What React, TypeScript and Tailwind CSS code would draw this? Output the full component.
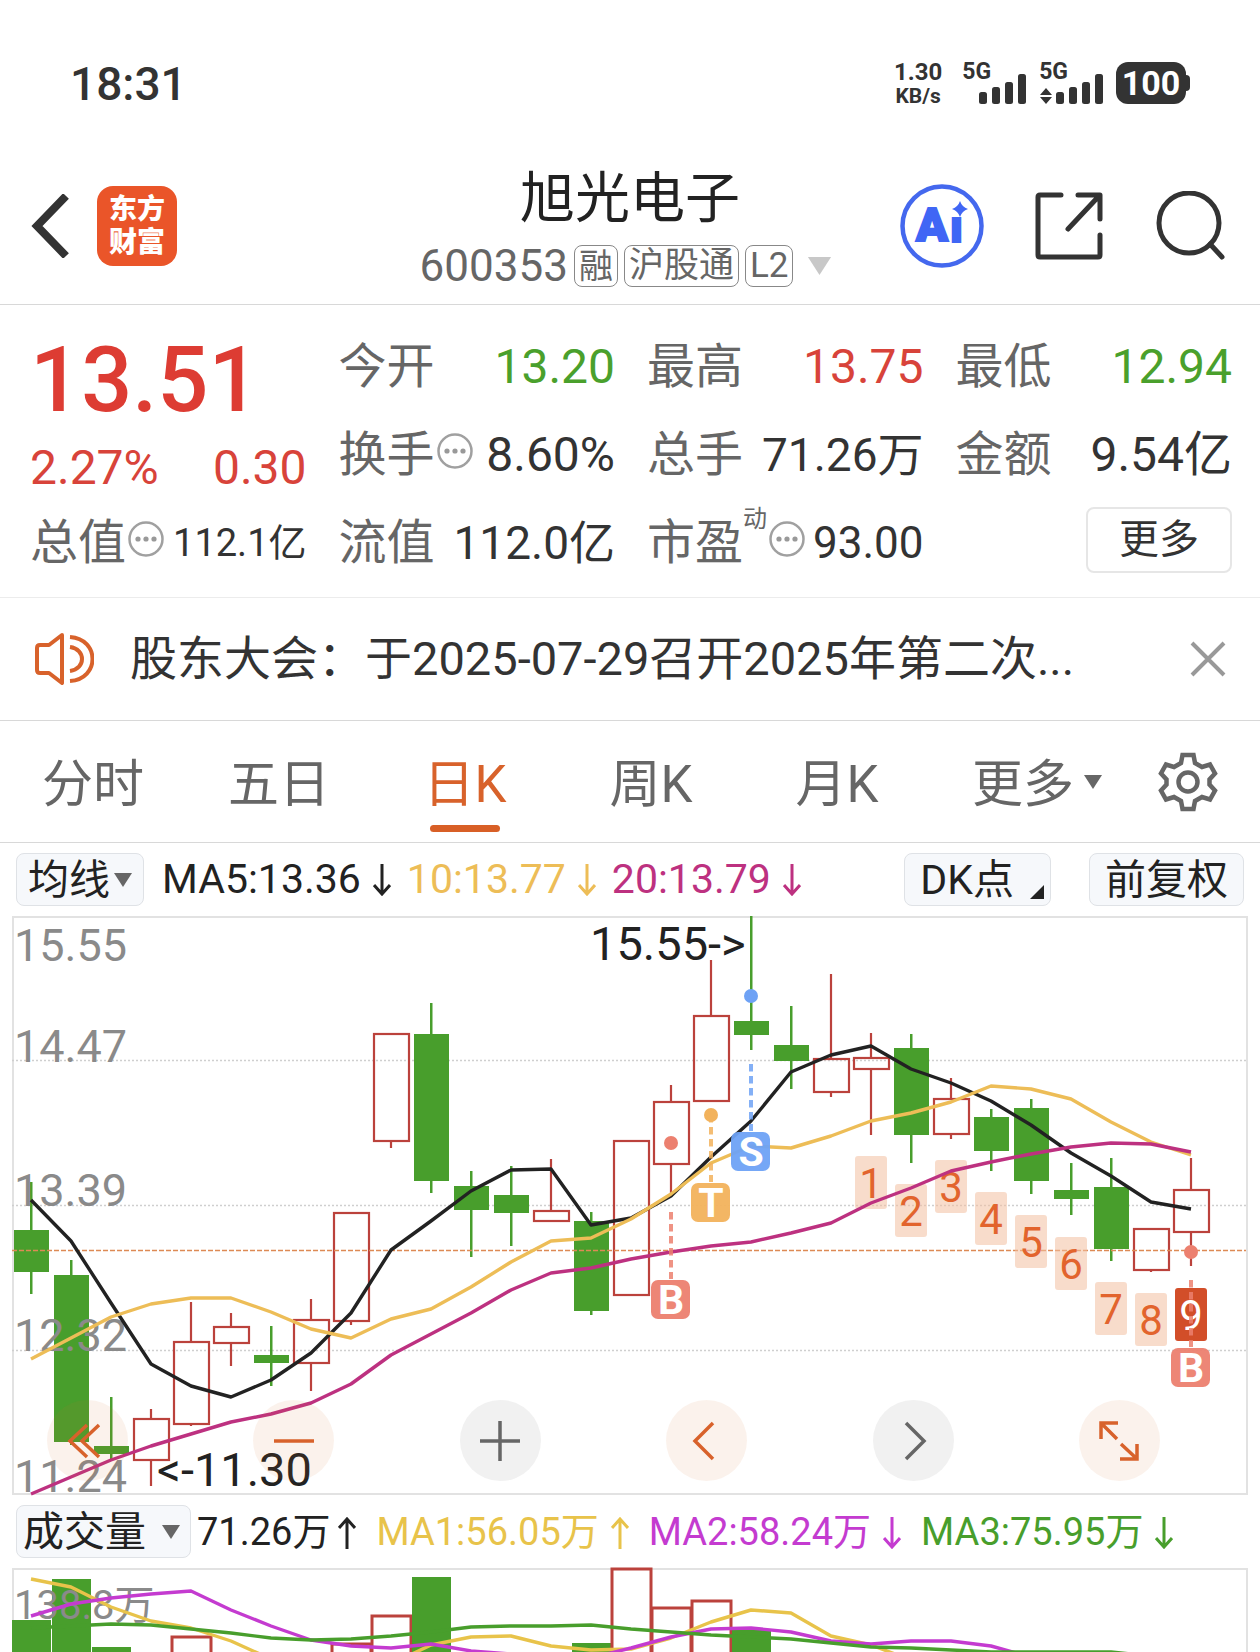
import React, { useState } from 'react';

type Candle = { up: boolean; high: number; top: number; bottom: number; low: number };

const STEP = 40;
const cx = (i: number) => 19 + i * STEP;

const u = (high: number, top: number, bottom: number, low: number): Candle => ({ up: true, high, top, bottom, low });
const d = (high: number, top: number, bottom: number, low: number): Candle => ({ up: false, high, top, bottom, low });

const candles: Candle[] = [
  d(266, 314, 356, 378), d(344, 359, 526, 529), d(481, 530, 538, 543), u(493, 503, 544, 570), u(386, 426, 508, 510),
  u(397, 411, 427, 450), d(410, 439, 447, 470), u(383, 404, 447, 475), u(297, 297, 405, 409), u(118, 118, 225, 232),
  d(87, 118, 265, 277), d(255, 270, 294, 341), d(250, 279, 297, 330), u(243, 295, 305, 305), d(296, 305, 395, 399),
  u(225, 225, 379, 379), u(169, 186, 248, 281), u(44, 100, 185, 185), d(0, 105, 119, 134), d(90, 129, 145, 173),
  u(58, 143, 176, 181), u(117, 142, 153, 219), d(118, 132, 219, 247), u(162, 183, 218, 223), d(193, 201, 235, 255),
  d(183, 192, 265, 278), d(247, 274, 283, 299), d(242, 271, 333, 345), u(312, 313, 354, 356), u(242, 274, 316, 350),
];

const ma5 = [284, 325, 387, 448, 470, 481, 464, 437, 397, 334, 305, 275, 254, 253, 309, 302, 280, 241, 205, 156, 139, 130, 153, 167, 185, 209, 237, 260, 286, 293];
const ma10 = [443, 422, 401, 388, 382, 382, 396, 413, 422, 403, 393, 371, 346, 325, 322, 303, 278, 247, 230, 232, 220, 205, 197, 186, 170, 173, 183, 206, 226, 239];
const ma20 = [578, 561, 544, 530, 518, 506, 498, 487, 468, 439, 418, 397, 374, 357, 352, 343, 336, 330, 326, 317, 307, 287, 272, 255, 246, 238, 231, 227, 228, 236];

const gridLabels = [
  { text: '15.55', y: 45 },
  { text: '14.47', y: 146 },
  { text: '13.39', y: 290 },
  { text: '12.32', y: 435 },
  { text: '11.24', y: 576 },
];

// nine-turn counters, starting at candle 21
const counters = [240, 268, 244, 276, 299, 321, 366, 377, 372];

const signals = [
  { letter: 'S', i: 18, dot: 80, from: 148, to: 215, box: 236, color: '#6ea2f5' },
  { letter: 'T', i: 17, dot: 199, from: 199, to: 266, box: 287, color: '#f2b25c' },
  { letter: 'B', i: 16, dot: 227, from: 296, to: 363, box: 384, color: '#ec806f' },
  { letter: 'B', i: 29, dot: 336, from: 364, to: 431, box: 452, color: '#ec806f' },
];

const volumes = [
  { i: 0, y: 52, up: false }, { i: 1, y: 11, up: false }, { i: 2, y: 79, up: false }, { i: 4, y: 68, up: true },
  { i: 8, y: 75, up: true }, { i: 9, y: 47, up: true }, { i: 10, y: 9, up: false }, { i: 14, y: 75, up: false },
  { i: 15, y: 0, up: true }, { i: 16, y: 39, up: true }, { i: 17, y: 32, up: true }, { i: 18, y: 62, up: false },
];

const vma1 = [11, 19, 39, 53, 60, 73, 91, 110, 110, 96, 77, 69, 68, 78, 82, 81, 70, 54, 42, 45, 68, 77, 92];
const vma2 = [48, 36, 30, 26, 23, 42, 58, 72, 78, 80, 76, 83, 86, 92, 90, 80, 69, 61, 60, 64, 73, 76, 73, 73, 78, 89];
const vma3 = [60, 58, 56, 57, 61, 65, 70, 72, 71, 68, 64, 59, 58, 58, 57, 61, 64, 67, 69, 71, 75, 79, 80, 82, 84, 84, 84, 84, 88];

const toPoints = (values: number[]) => values.map((y, i) => `${cx(i)},${y}`).join(' ');

function Triangle({ className }: { className: string }) {
  return (
    <svg viewBox="0 0 18 14" className={className} fill="currentColor" aria-hidden="true">
      <path d="M0 0h18L9 14z" />
    </svg>
  );
}

function Arrow({ up = false }: { up?: boolean }) {
  return (
    <svg viewBox="0 0 18 32" className="h-8 w-[18px] shrink-0" fill="none" stroke="currentColor" strokeWidth="3" aria-hidden="true">
      <path d={up ? 'M9 32V2M1 11L9 2l8 9' : 'M9 0v30M1 21l8 9 8-9'} />
    </svg>
  );
}

function InfoDots() {
  return (
    <svg viewBox="0 0 36 36" className="mb-2 ml-0.5 h-9 w-9 shrink-0" aria-hidden="true">
      <circle cx="18" cy="18" r="16.5" fill="none" stroke="#a0a0a0" strokeWidth="2.5" />
      <g fill="#999">
        <circle cx="10" cy="18" r="2.6" />
        <circle cx="18" cy="18" r="2.6" />
        <circle cx="26" cy="18" r="2.6" />
      </g>
    </svg>
  );
}

function SignalBars() {
  return (
    <svg viewBox="0 0 48 30" className="h-[30px] w-12" fill="#333" aria-hidden="true">
      <rect x="0" y="18" width="8" height="12" rx="2.5" />
      <rect x="13" y="13" width="8" height="17" rx="2.5" />
      <rect x="26" y="8" width="8" height="22" rx="2.5" />
      <rect x="39" y="0" width="8" height="30" rx="2.5" />
    </svg>
  );
}

function StatusBar() {
  return (
    <div className="flex h-[148px] items-start justify-between px-[70px] pt-[60px] text-[#333]">
      <span className="text-[46px] leading-[48px] font-medium">18:31</span>
      <div className="flex items-start font-bold">
        <div className="mr-5 text-center">
          <div className="text-2xl leading-6">1.30</div>
          <div className="text-[21px] leading-6">KB/s</div>
        </div>
        <div className="mr-3 flex h-11 items-end">
          <span className="-mr-3 self-start text-[23px] leading-6">5G</span>
          <SignalBars />
        </div>
        <div className="mr-3 flex h-11 items-end">
          <span className="-mr-7 self-start text-[23px] leading-6">5G</span>
          <svg viewBox="0 0 12 16" className="mr-1 h-4 w-3" fill="#333" aria-hidden="true">
            <path d="M6 0l6 7H0zM0 9h12l-6 7z" />
          </svg>
          <SignalBars />
        </div>
        <div className="flex items-center pt-0.5">
          <div className="grid h-[42px] w-[70px] place-items-center rounded-xl bg-[#333] text-[34px] leading-[42px] text-white">100</div>
          <div className="h-4 w-1 rounded-r bg-[#333]" />
        </div>
      </div>
    </div>
  );
}

function Header() {
  return (
    <header className="grid h-[157px] grid-cols-[1fr_auto_1fr] items-center border-b border-[#d8d8d8] px-[31px]">
      <div className="flex items-center gap-7">
        <button aria-label="返回">
          <svg viewBox="0 0 38 64" className="h-16 w-[38px]" fill="none" stroke="#333" strokeWidth="8">
            <path d="M35 2L6 32l29 30" />
          </svg>
        </button>
        <div className="grid h-20 w-20 place-content-center rounded-2xl bg-[#ea5529] text-center text-[28px] leading-[33px] font-black text-white">
          <span>东方</span>
          <span>财富</span>
        </div>
      </div>

      <div className="flex flex-col items-center gap-3.5">
        <h1 className="text-[55px] leading-[66px] text-[#222]">旭光电子</h1>
        <div className="flex items-center gap-1.5 text-[#666]">
          <span className="text-[44px] leading-[42px]">600353</span>
          <span className="h-[42px] rounded-lg border border-[#888] px-1 text-[34px] leading-10">融</span>
          <span className="h-[42px] rounded-lg border border-[#888] px-1 text-[35px] leading-10">沪股通</span>
          <span className="h-[42px] rounded-lg border border-[#888] px-1 text-[35px] leading-10">L2</span>
          <Triangle className="mx-2 h-[18px] w-[25px] text-[#c8c8c8]" />
        </div>
      </div>

      <div className="flex items-center justify-end">
        <button aria-label="Ai" className="mr-[51px]">
          <svg viewBox="0 0 84 84" className="h-[84px] w-[84px]">
            <circle cx="42" cy="42" r="39.5" fill="none" stroke="#4468ee" strokeWidth="4.5" />
            <g fill="#4066f5" className="font-['Roboto',sans-serif] font-black">
              <text x="16" y="57" fontSize="47" stroke="#4066f5" strokeWidth="2">A</text>
              <text x="50" y="58" fontSize="45" stroke="#4066f5" strokeWidth="2">ı</text>
            </g>
            <path d="M60 17q2 6 8 8-6 2-8 8-2-6-8-8 6-2 8-8z" fill="#4066f5" />
          </svg>
        </button>
        <button aria-label="分享" className="mr-[52px]">
          <svg viewBox="0 0 68 68" className="h-[68px] w-[68px]" fill="none" stroke="#333" strokeWidth="5" strokeLinecap="round" strokeLinejoin="round">
            <path d="M26 3H5q-2 0-2 2v58q0 2 2 2h58q2 0 2-2V43M43 3h22v24M64 4L33 37" />
          </svg>
        </button>
        <button aria-label="搜索" className="mr-1">
          <svg viewBox="0 0 70 70" className="h-[70px] w-[70px]" fill="none" stroke="#333" strokeWidth="5" strokeLinecap="round">
            <circle cx="34" cy="32" r="30" />
            <path d="M55 53l12 13" />
          </svg>
        </button>
      </div>
    </header>
  );
}

interface StatProps {
  label: string;
  value: string;
  tone?: string;
  size?: string;
  info?: boolean;
  sup?: string;
}

function Stat({ label, value, tone = 'text-[#333]', size = 'text-[46px]', info, sup }: StatProps) {
  return (
    <div className="flex h-[88px] items-center justify-between whitespace-nowrap">
      <dt className="flex items-center text-[48px] leading-[60px] text-[#666]">
        {label}
        {sup && <sup className="mb-6 text-2xl leading-7">{sup}</sup>}
        {info && <InfoDots />}
      </dt>
      <dd className={`${size} ${tone} leading-[60px]`}>{value}</dd>
    </div>
  );
}

function Quote() {
  return (
    <section className="border-b border-[#ececec] pt-[18px] pr-7 pb-2.5 pl-[30px]">
      <dl className="grid grid-cols-4 gap-x-8">
        <div className="row-span-2 text-[#dd3c33]">
          <div className="text-[90px] leading-[116px] font-medium">13.51</div>
          <div className="flex justify-between text-[48px] leading-[58px] text-[#d8433a]">
            <span>2.27%</span>
            <span>0.30</span>
          </div>
        </div>
        <Stat label="今开" value="13.20" size="text-[48px]" tone="text-[#4aa02c]" />
        <Stat label="最高" value="13.75" size="text-[48px]" tone="text-[#d8433a]" />
        <Stat label="最低" value="12.94" size="text-[48px]" tone="text-[#4aa02c]" />
        <Stat label="换手" value="8.60%" size="text-[48px]" info />
        <Stat label="总手" value="71.26万" />
        <Stat label="金额" value="9.54亿" size="text-[48px]" />
        <Stat label="总值" value="112.1亿" size="text-[38px]" info />
        <Stat label="流值" value="112.0亿" />
        <Stat label="市盈" value="93.00" size="text-[44px]" sup="动" info />
        <div className="flex h-[88px] items-start justify-end pt-2">
          <button className="h-[66px] w-[146px] rounded-lg border-2 border-[#e6e6e6] text-[40px] leading-[60px] text-[#333]">更多</button>
        </div>
      </dl>
    </section>
  );
}

function Notice() {
  return (
    <section className="flex h-[123px] items-center border-b border-[#d8d8d8] px-[34px]">
      <svg viewBox="0 0 60 52" className="h-[52px] w-[60px] shrink-0" fill="none" stroke="#d8622b" strokeWidth="4" strokeLinejoin="round" aria-hidden="true">
        <path d="M28 2L15 12H6q-3 0-3 3v22q0 3 3 3h9l13 10z" />
        <path d="M36 4c30 2 30 42 0 44M36 14c16 2 16 22 0 24" />
      </svg>
      <a href="#notice" className="ml-9 flex-1 truncate text-[47px] leading-[60px] text-[#333]">
        股东大会：于2025-07-29召开2025年第二次...
      </a>
      <button aria-label="关闭" className="shrink-0">
        <svg viewBox="0 0 36 36" className="h-9 w-9" fill="none" stroke="#999" strokeWidth="4">
          <path d="M2 2l32 32M34 2L2 34" />
        </svg>
      </button>
    </section>
  );
}

const tabs = ['分时', '五日', '日K', '周K', '月K'];

function Tabs() {
  const [active, setActive] = useState('日K');

  return (
    <nav className="grid h-[122px] grid-cols-[repeat(6,186fr)_144fr] border-b border-[#d8d8d8] text-[51px] text-[#666]">
      {tabs.map(tab => (
        <button
          key={tab}
          onClick={() => setActive(tab)}
          className={`flex flex-col items-center justify-end pb-2.5 ${active === tab ? 'text-[#d8622b]' : ''}`}
        >
          <span className="leading-[72px]">{tab}</span>
          <span className={`mt-1 h-[7px] w-[70px] rounded-full ${active === tab ? 'bg-[#d85f26]' : ''}`} />
        </button>
      ))}
      <button className="flex items-end justify-center gap-2.5 pb-[21px] pl-7 leading-[72px]">
        更多
        <Triangle className="mb-8 h-3.5 w-[18px] shrink-0" />
      </button>
      <button aria-label="设置" className="grid place-items-center">
        <svg viewBox="0 0 60 60" className="h-[60px] w-[60px]" fill="none" stroke="#666" strokeWidth="4.5" strokeLinejoin="miter">
          <path d="M24.500 3h11l1.500 8 7 4 8-2.500 5 9-5.500 6v5l5.500 6-5 9-8-2.500-7 4-1.500 8h-11l-1.500-8-7-4-8 2.500-5-9 5.500-6v-5l-5.500-6 5-9 8 2.500 7-4z" />
          <circle cx="30" cy="30" r="9.5" />
        </svg>
      </button>
    </nav>
  );
}

const chipClass = 'flex h-[53px] shrink-0 items-center rounded-lg border border-[#dfe2e6] bg-[#f6f8fb] text-[41px] leading-[50px] text-[#222]';

function MaBar() {
  return (
    <div className="flex h-[73px] items-center px-4 text-[41px] whitespace-nowrap">
      <button className={`${chipClass} gap-1 px-[11px]`}>
        均线
        <Triangle className="h-3.5 w-[18px] text-[#666]" />
      </button>
      <div className="ml-[18px] flex items-center gap-3 text-[#222]">MA5:13.36<Arrow /></div>
      <div className="ml-4 flex items-center gap-3 text-[#edbd57]">10:13.77<Arrow /></div>
      <div className="ml-4 flex items-center gap-3 text-[#bd3180]">20:13.79<Arrow /></div>
      <button className={`${chipClass} ml-auto gap-4 pr-1.5 pl-[15px]`}>
        DK点
        <svg viewBox="0 0 14 14" className="mb-1.5 h-3.5 w-3.5 self-end" fill="#222" aria-hidden="true">
          <path d="M14 0v14H0z" />
        </svg>
      </button>
      <button className={`${chipClass} ml-[38px] px-[15px]`}>前复权</button>
    </div>
  );
}

function CandleShape({ candle, index }: { candle: Candle; index: number }) {
  const x = cx(index);
  const { up, high, top, bottom, low } = candle;
  if (!up) {
    return (
      <g fill="#489e2c">
        <rect x={x - 1} y={high} width="2.5" height={low - high} />
        <rect x={x - 17} y={top} width="35" height={bottom - top} />
      </g>
    );
  }
  return (
    <g stroke="#bb423c" strokeWidth="2.2" fill="none">
      <path d={`M${x} ${high}V${top}M${x} ${bottom}V${low}`} />
      <rect x={x - 17} y={top} width="35" height={bottom - top} />
    </g>
  );
}

const controls = [
  { label: '最左', gray: false, path: 'M27 12L10 28l17 16M39 12L22 28l17 16' },
  { label: '缩小', gray: false, path: 'M8 28h40' },
  { label: '放大', gray: true, path: 'M8 28h40M28 8v40' },
  { label: '左移', gray: false, path: 'M34 10L16 28l18 18' },
  { label: '右移', gray: true, path: 'M21 10l18 18-18 18' },
  { label: '全屏', gray: false, path: 'M10 26V10h17M11 11l15 15M46 31v15H29M45 45L30 31' },
];

function KChart() {
  return (
    <div className="relative mx-3 border-2 border-[#e2e2e2]">
      <svg viewBox="0 0 1232 575" className="block w-full overflow-visible font-['Roboto','Noto_Sans_CJK_SC',sans-serif]" role="img" aria-label="日K线">
        <g transform="translate(-2 -2)">
          <g stroke="#cfcfcf" strokeWidth="1.5" strokeDasharray="2 2">
            <path d="M0 144.500H1234M0 289.500H1234M0 434.500H1234" />
          </g>

          {candles.map((candle, i) => (
            <CandleShape key={i} candle={candle} index={i} />
          ))}

          <path d="M0 334.500H1234" stroke="#dd8a55" strokeWidth="1.5" strokeDasharray="5 2" />

          <g fontSize="45" fill="#8a8a8a">
            {gridLabels.map(label => (
              <text key={label.text} x="2" y={label.y}>{label.text}</text>
            ))}
          </g>

          {counters.map((y, n) => {
            const last = n === 8;
            return (
              <g key={n}>
                <rect x={cx(21 + n) - 16} y={y} width="32" height="53" rx="3" fill={last ? '#d24e29' : '#f3bfa0'} fillOpacity={last ? 1 : 0.55} />
                <text x={cx(21 + n)} y={y + 42} fontSize="42" textAnchor="middle" fill={last ? '#fff' : '#e2642d'}>{n + 1}</text>
              </g>
            );
          })}

          <g fill="none" strokeWidth="3.4" strokeLinejoin="round">
            <polyline points={toPoints(ma5)} stroke="#222" />
            <polyline points={toPoints(ma10)} stroke="#edbd57" />
            <polyline points={toPoints(ma20)} stroke="#bd3180" />
          </g>

          {signals.map(s => (
            <g key={s.letter + s.i}>
              <circle cx={cx(s.i)} cy={s.dot} r="7" fill={s.color} />
              <path d={`M${cx(s.i)} ${s.from}V${s.to}`} stroke={s.color} strokeWidth="4" strokeDasharray="7.5 4.5" strokeOpacity="0.85" />
              <rect x={cx(s.i) - 20} y={s.box - 20} width="39" height="39" rx="7" fill={s.color} fillOpacity="0.95" />
              <text x={cx(s.i)} y={s.box + 14} fontSize="41" fontWeight="700" textAnchor="middle" fill="#fff">{s.letter}</text>
            </g>
          ))}

          <g fontSize="47" fill="#222">
            <text x="578" y="44">15.55-&gt;</text>
            <text x="145" y="570">&lt;-11.30</text>
          </g>
        </g>
      </svg>

      <div className="absolute right-[86px] bottom-3 left-[33px] flex justify-between">
        {controls.map(c => (
          <button
            key={c.label}
            aria-label={c.label}
            className={`grid h-[81px] w-[81px] place-items-center rounded-full ${c.gray ? 'bg-[#777]/10 text-[#666]' : 'bg-[#d8722b]/9 text-[#d8622b]'}`}
          >
            <svg viewBox="0 0 56 56" className="h-14 w-14" fill="none" stroke="currentColor" strokeWidth="3.5">
              <path d={c.path} />
            </svg>
          </button>
        ))}
      </div>
    </div>
  );
}

function VolumeBar() {
  return (
    <div className="flex h-[73px] items-center pl-4 text-[38px] whitespace-nowrap">
      <button className={`${chipClass} gap-4 pr-2.5 pl-1.5`}>
        成交量
        <Triangle className="h-3.5 w-[18px] text-[#666]" />
      </button>
      <div className="ml-1.5 flex items-center gap-2 pt-0.5 text-[#222]">71.26万<Arrow up /></div>
      <div className="ml-5 flex items-center gap-3 pt-0.5 text-[#e8c34a]">MA1:56.05万<Arrow up /></div>
      <div className="ml-5 flex items-center gap-3 pt-0.5 text-[#c43bd0]">MA2:58.24万<Arrow /></div>
      <div className="ml-5 flex items-center gap-3 pt-0.5 text-[#489e2c]">MA3:75.95万<Arrow /></div>
    </div>
  );
}

function VolumeChart() {
  return (
    <div className="mx-3 border-2 border-b-0 border-[#e2e2e2]">
      <svg viewBox="0 0 1232 82" className="block w-full overflow-visible font-['Roboto','Noto_Sans_CJK_SC',sans-serif]" role="img" aria-label="成交量">
        <g transform="translate(-2 -2)">
          {volumes.map(v => (
            v.up
              ? <rect key={v.i} x={v.i * STEP} y={v.y + 1} width="39" height="120" fill="none" stroke="#bb423c" strokeWidth="3" />
              : <rect key={v.i} x={v.i * STEP} y={v.y} width="39" height="120" fill="#489e2c" />
          ))}
          <text x="2" y="51" fontSize="40" fill="#8a8a8a">138.8万</text>
          <g fill="none" strokeWidth="3.4" strokeLinejoin="round">
            <polyline points={toPoints(vma1)} stroke="#e8c34a" />
            <polyline points={toPoints(vma2)} stroke="#c43bd0" />
            <polyline points={toPoints(vma3)} stroke="#489e2c" />
          </g>
        </g>
      </svg>
    </div>
  );
}

export default function App() {
  return (
    <main className="w-full overflow-hidden bg-white font-['Roboto','Noto_Sans_CJK_SC',sans-serif]">
      <StatusBar />
      <Header />
      <Quote />
      <Notice />
      <Tabs />
      <MaBar />
      <KChart />
      <VolumeBar />
      <VolumeChart />
    </main>
  );
}
